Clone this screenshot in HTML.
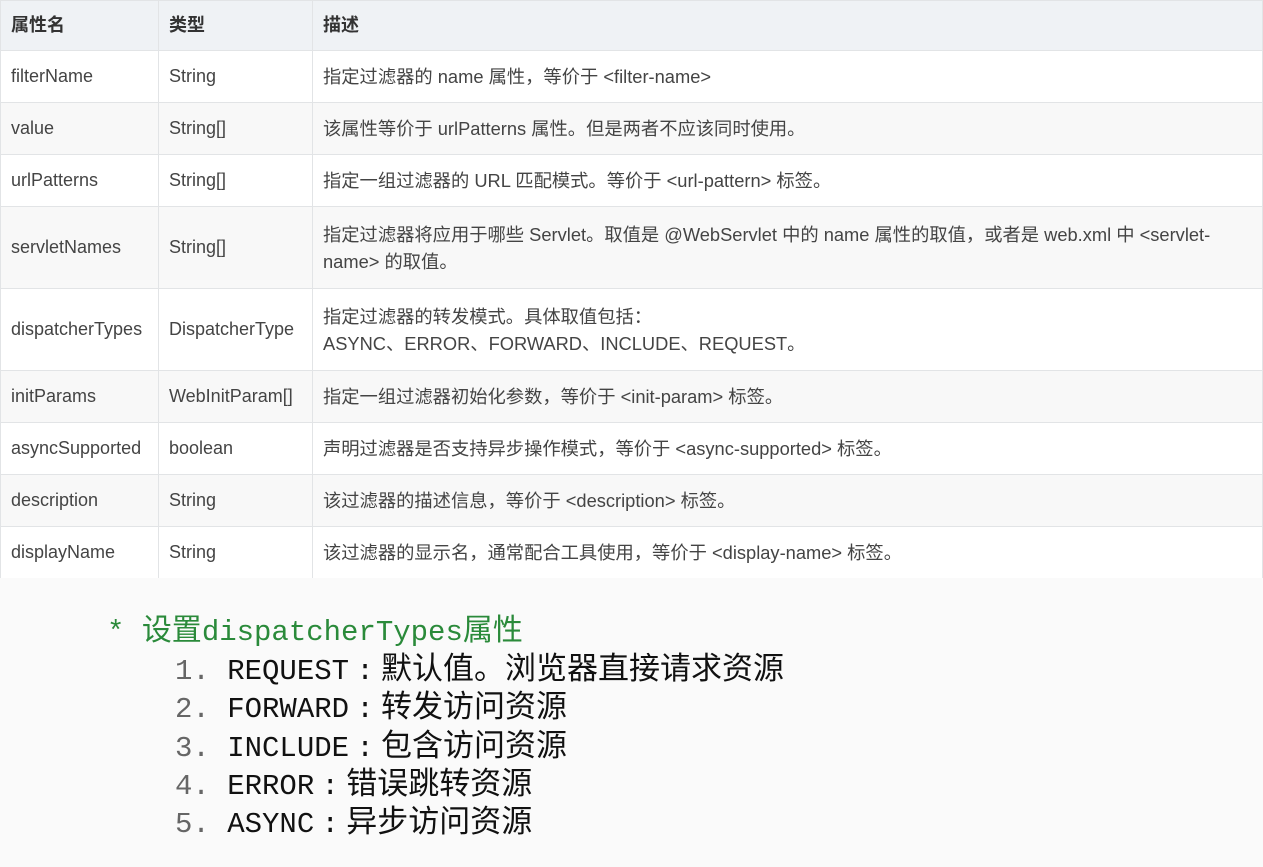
<!DOCTYPE html>
<html><head><meta charset="utf-8"><style>
body{margin:0;width:1263px;height:867px;background:#fff;overflow:hidden;font-family:"Liberation Sans","Noto Sans CJK SC",sans-serif;}
table{border-collapse:collapse;position:absolute;left:0;top:0;width:1263px;font-size:18px;color:#444;}
td,th{border:1px solid #e2e4e6;padding:0 10px;text-align:left;vertical-align:middle;line-height:27px}
td:nth-child(3){font-size:18.3px;}
th{background:#eff2f5;font-weight:bold;color:#333;height:49px;font-size:18px}
td{height:51px}
tr:nth-child(odd) td{background:#f8f8f8}
tr.tall td{height:81px}
.sec{position:absolute;left:0;top:578px;width:1263px;height:289px;background:#fafafa;}
.mono{font-family:"Liberation Mono","DejaVu Sans Mono","Noto Sans CJK SC",monospace;}
.h{position:absolute;left:107px;top:605px;font-size:29px;color:#2a8a3a;white-space:nowrap}
.h .c{font-size:30px}
.i{position:absolute;left:175px;font-size:29px;color:#111;white-space:nowrap}
.i .n{color:#666}
.i .k{display:inline-block;width:32px;text-align:center}
.i .c{font-size:31px;font-family:"Noto Sans CJK SC",sans-serif}
</style></head><body>
<table>
<tr><th style="width:137px">属性名</th><th style="width:133px">类型</th><th>描述</th></tr>
<tr><td>filterName</td><td>String</td><td>指定过滤器的 name 属性，等价于 &lt;filter-name&gt;</td></tr>
<tr><td>value</td><td>String[]</td><td>该属性等价于 urlPatterns 属性。但是两者不应该同时使用。</td></tr>
<tr><td>urlPatterns</td><td>String[]</td><td>指定一组过滤器的 URL 匹配模式。等价于 &lt;url-pattern&gt; 标签。</td></tr>
<tr class="tall"><td>servletNames</td><td>String[]</td><td>指定过滤器将应用于哪些 Servlet。取值是 @WebServlet 中的 name 属性的取值，或者是 web.xml 中 &lt;servlet-<br>name&gt; 的取值。</td></tr>
<tr class="tall"><td>dispatcherTypes</td><td>DispatcherType</td><td>指定过滤器的转发模式。具体取值包括：<br>ASYNC、ERROR、FORWARD、INCLUDE、REQUEST。</td></tr>
<tr><td>initParams</td><td>WebInitParam[]</td><td>指定一组过滤器初始化参数，等价于 &lt;init-param&gt; 标签。</td></tr>
<tr><td>asyncSupported</td><td>boolean</td><td>声明过滤器是否支持异步操作模式，等价于 &lt;async-supported&gt; 标签。</td></tr>
<tr><td>description</td><td>String</td><td>该过滤器的描述信息，等价于 &lt;description&gt; 标签。</td></tr>
<tr><td>displayName</td><td>String</td><td>该过滤器的显示名，通常配合工具使用，等价于 &lt;display-name&gt; 标签。</td></tr>
</table>
<div class="sec"></div>
<div class="h mono">* <span class="c">设置</span>dispatcherTypes<span class="c">属性</span></div>
<div class="i mono" style="top:643px"><span class="n">1. </span>REQUEST<span class="k">:</span><span class="c">默认值。浏览器直接请求资源</span></div>
<div class="i mono" style="top:681px"><span class="n">2. </span>FORWARD<span class="k">:</span><span class="c">转发访问资源</span></div>
<div class="i mono" style="top:720px"><span class="n">3. </span>INCLUDE<span class="k">:</span><span class="c">包含访问资源</span></div>
<div class="i mono" style="top:758px"><span class="n">4. </span>ERROR<span class="k">:</span><span class="c">错误跳转资源</span></div>
<div class="i mono" style="top:796px"><span class="n">5. </span>ASYNC<span class="k">:</span><span class="c">异步访问资源</span></div>
</body></html>
